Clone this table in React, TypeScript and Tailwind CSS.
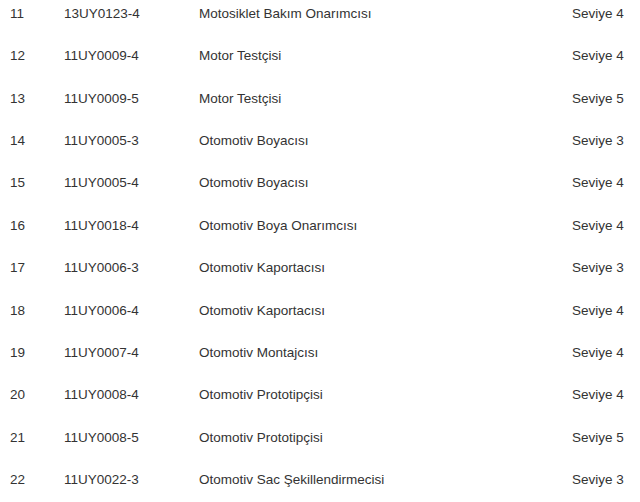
const rows = [
  ["11", "13UY0123-4", "Motosiklet Bakım Onarımcısı", "Seviye 4"],
  ["12", "11UY0009-4", "Motor Testçisi", "Seviye 4"],
  ["13", "11UY0009-5", "Motor Testçisi", "Seviye 5"],
  ["14", "11UY0005-3", "Otomotiv Boyacısı", "Seviye 3"],
  ["15", "11UY0005-4", "Otomotiv Boyacısı", "Seviye 4"],
  ["16", "11UY0018-4", "Otomotiv Boya Onarımcısı", "Seviye 4"],
  ["17", "11UY0006-3", "Otomotiv Kaportacısı", "Seviye 3"],
  ["18", "11UY0006-4", "Otomotiv Kaportacısı", "Seviye 4"],
  ["19", "11UY0007-4", "Otomotiv Montajcısı", "Seviye 4"],
  ["20", "11UY0008-4", "Otomotiv Prototipçisi", "Seviye 4"],
  ["21", "11UY0008-5", "Otomotiv Prototipçisi", "Seviye 5"],
  ["22", "11UY0022-3", "Otomotiv Sac Şekillendirmecisi", "Seviye 3"],
];

const App = () => {
  return (
    <div className="w-[640px] h-[502px] overflow-hidden bg-white text-[13.5px] text-[#333] font-['Liberation_Sans',Arial,sans-serif]">
      <div className="-mt-[7px]">
        {rows.map(([no, code, name, level]) => (
          <div
            key={no}
            className="h-[42.36px] grid grid-cols-[54px_135px_373px_1fr] items-center pl-[10px]"
          >
            <span>{no}</span>
            <span>{code}</span>
            <span>{name}</span>
            <span>{level}</span>
          </div>
        ))}
      </div>
    </div>
  );
};

export default App;
